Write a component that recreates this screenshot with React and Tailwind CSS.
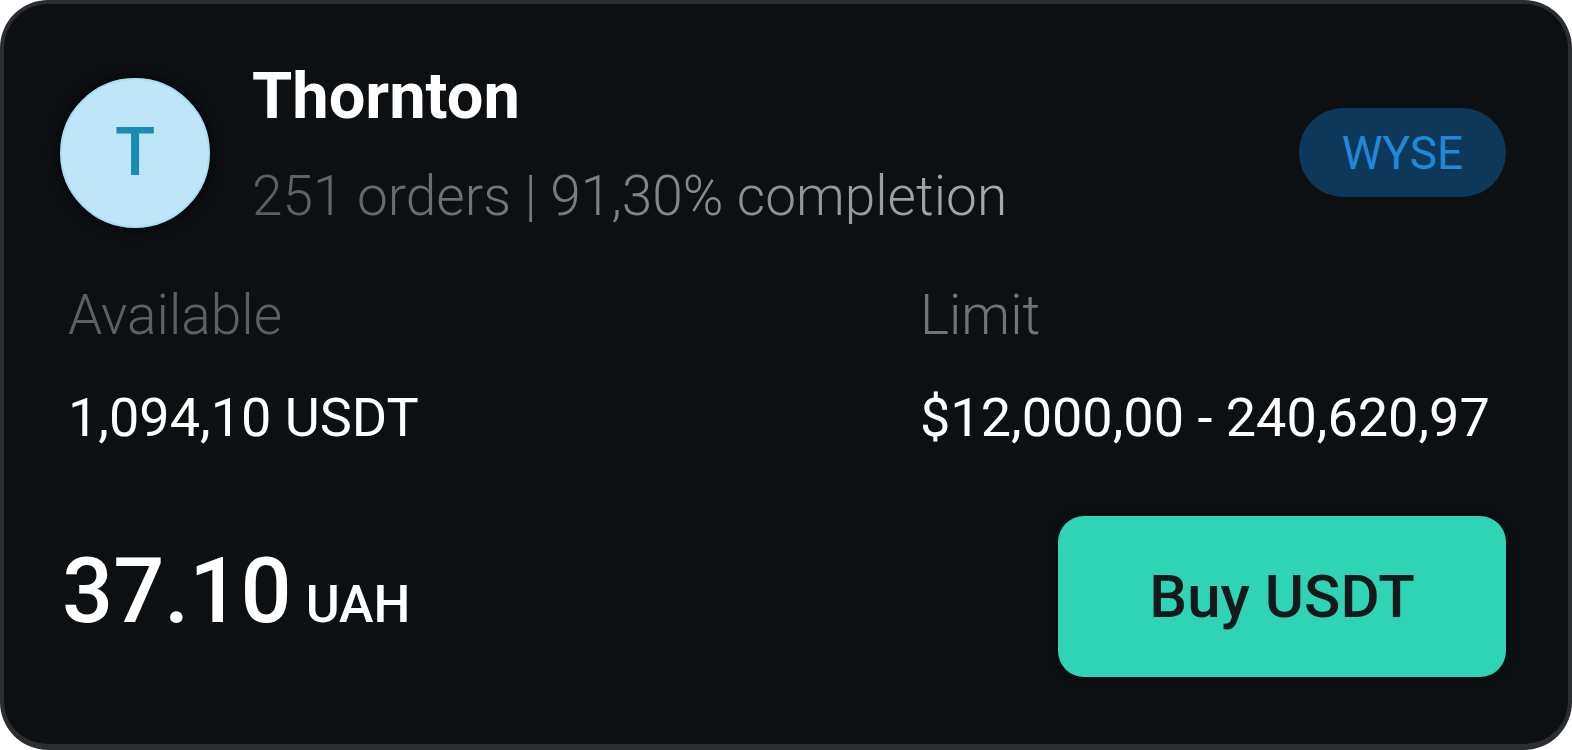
import React from 'react'

// P2P merchant offer card
const App = () => {
  return (
    <div className="w-full h-[750px] bg-white" style={{ fontFamily: 'Roboto, "Noto Sans", sans-serif' }}>
      <div className="h-full rounded-[48px] border-[4px] border-b-[6px] border-[#2b2d30] bg-[#0d1013] pl-[56px] pr-[62px] pt-[60px] flex flex-col">
        {/* Header */}
        <div className="flex items-start">
          <div className="mt-[14px] w-[150px] h-[150px] shrink-0 rounded-full bg-[#bee6f8] border-2 border-[#a9def5] shadow-[0_0_14px_rgba(0,0,0,0.9)] flex items-center justify-center">
            <span className="text-[66px] leading-none font-medium text-[#1a8cb3]">T</span>
          </div>
          <div className="ml-[42px] flex-1">
            <div className="text-[65px] leading-none font-bold text-white">Thornton</div>
            <div className="mt-[40px] text-[55px] leading-none font-light bg-linear-to-r from-[#5c5c5c] to-[#aaaaaa] bg-clip-text text-transparent w-fit">
              251 orders | 91,30% completion
            </div>
          </div>
          <div className="mt-[44px] w-[207px] h-[89px] rounded-full bg-[#0e3859] flex items-center justify-center">
            <span className="text-[46px] leading-none text-[#1f88d8]">WYSE</span>
          </div>
        </div>

        {/* Available / Limit */}
        <div className="mt-[60px] ml-[8px] flex">
          <div className="w-[852px]">
            <div className="text-[55px] leading-none font-light text-[#5f5f5f]">Available</div>
            <div className="mt-[48px] text-[54px] leading-none text-white">1,094,10 USDT</div>
          </div>
          <div>
            <div className="text-[55px] leading-none font-light text-[#737373]">Limit</div>
            <div className="mt-[48px] text-[54px] leading-none text-white">$12,000,00 - 240,620,97</div>
          </div>
        </div>

        {/* Price + action */}
        <div className="mt-[71px] flex items-center justify-between">
          <div className="ml-[2px] mb-[9px] flex items-baseline text-white">
            <span className="text-[90px] leading-none font-medium">37.10</span>
            <span className="ml-[14px] text-[52px] leading-none font-medium">UAH</span>
          </div>
          <button className="w-[448px] h-[161px] rounded-[26px] bg-[#2fd4b4] shadow-[0_0_10px_rgba(0,0,0,0.6)] text-[60px] font-medium text-[#16181a] leading-none">
            Buy USDT
          </button>
        </div>
      </div>
    </div>
  )
}

export default App
